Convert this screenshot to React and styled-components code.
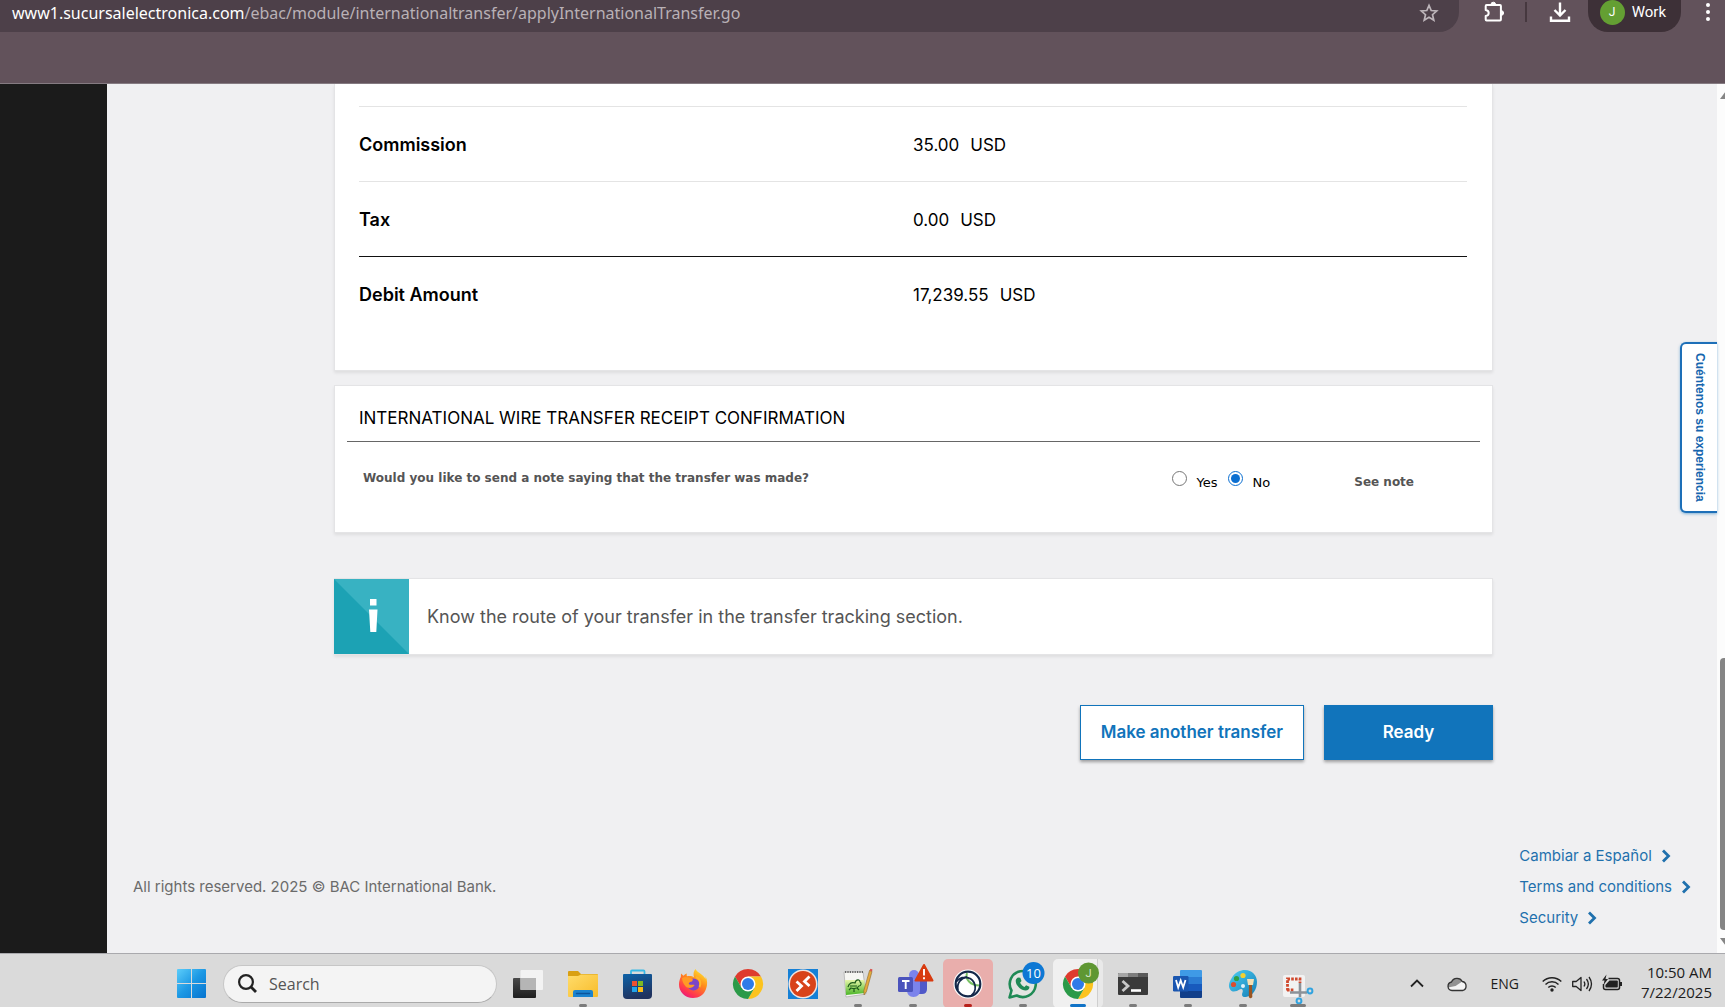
import React, { Component } from "react";
import styled, { createGlobalStyle, css } from "styled-components";

const ui = `Inter, "Liberation Sans", sans-serif`;
const system = `"Open Sans", "Noto Sans", sans-serif`;
const legacy = `"DejaVu Sans", sans-serif`;

const GlobalStyle = createGlobalStyle`
  * { box-sizing: border-box; }
  body { margin: 0; font-family: ${ui}; color: #000; }
  button, input { font: inherit; }
  button { cursor: pointer; }
  svg { display: block; flex: none; overflow: visible; }
`;

let Page = styled.div`
  display: flex;
  flex-direction: column;
  min-height: 100vh;
`;

/*------------------------------------------------------
 Browser bar
 ----------------------------------------------------- */

let Browser = styled.header`
  height: 84px;
  background: #62525b;
  border-bottom: 1px solid #857b82;
`;

let Toolbar = styled.div`
  display: flex;
  height: 32px;
  padding-right: 13px;
`;

let Address = styled.div`
  flex: 1;
  min-width: 0;
  display: flex;
  align-items: center;
  justify-content: space-between;
  padding: 0 20px 6px 12px;
  margin-right: 24px;
  border-radius: 0 0 20px 0;
  background: #4d4049;
  color: #b9b1b6;
  font-family: "Noto Sans", sans-serif;
  font-size: 16px;
  line-height: 24px;

  b {
    color: #fff;
    font-weight: 400;
  }
`;

let BarButton = styled.button`
  display: flex;
  align-items: center;
  padding: 0 0 8px;
  border: 0;
  background: none;
  color: #fff;
`;

let BarDivider = styled.span`
  width: 2px;
  height: 20px;
  margin: 2px 22px 0 20px;
  background: #46383f;
`;

let Profile = styled.button`
  display: flex;
  align-items: center;
  gap: 7px;
  margin: 0 23px 0 17px;
  padding: 0 15px 8px 12px;
  border: 0;
  border-radius: 0 0 20px 20px;
  background: #3d3037;
  color: #fff;
  font-family: Roboto, sans-serif;
  font-size: 15px;
`;

let Avatar = styled.span`
  width: 25px;
  height: 25px;
  border-radius: 50%;
  background: #649f33;
  font-size: 12px;
  line-height: 25px;
  text-align: center;
`;

/*------------------------------------------------------
 Bank page
 ----------------------------------------------------- */

let Viewport = styled.div`
  flex: 1;
  display: flex;
`;

let Sidebar = styled.div`
  width: 107px;
  background: #1b1b1b;
`;

let Content = styled.div`
  position: relative;
  flex: 1;
  display: flex;
  flex-direction: column;
  background: #f0f0f2;
`;

let Main = styled.main`
  margin: 0 224px 0 227px;
`;

let Card = styled.section`
  margin-bottom: ${props => props.$gap || 0}px;
  background: #fff;
  border: 1px solid #e4e4e6;
  box-shadow: 0 2px 3px rgba(0, 0, 0, 0.08);
`;

let AmountCard = styled(Card)`
  padding: 22px 25px 38px 24px;
  border-top: 0;
`;

let Amounts = styled.table`
  width: 100%;
  table-layout: fixed;
  border-collapse: collapse;
  text-align: left;
`;

let AmountRow = styled.tr`
  height: 75px;
  border-top: 1px solid ${props => (props.$total ? "#111" : "#e4e4e4")};

  th, td {
    width: 50%;
    padding: 0;
  }
  th {
    font-size: 18px;
    font-weight: 600;
  }
  td {
    padding-top: 2px;
    font-size: 17px;
  }
  td span { margin-left: 11px; }
`;

let NoteCard = styled(Card)`
  padding: 0 12px 21px;
`;

let NoteTitle = styled.h2`
  margin: 0;
  padding: 20px 12px 11px;
  border-bottom: 1px solid #666;
  font-size: 17px;
  font-weight: 400;
  line-height: 24px;
`;

let NoteRow = styled.div`
  display: flex;
  align-items: center;
  height: 62px;
  margin-top: 7px;
  padding: 0 66px 0 16px;
  font-family: ${legacy};
  font-size: 12px;
`;

let Question = styled.span`
  flex: 1;
  padding-bottom: 4px;
  color: #555;
  font-weight: 700;
`;

let Choice = styled.label`
  display: flex;
  align-items: center;
  gap: 10px;
  margin-right: 10px;
  padding-top: 5px;
  font-size: 13px;

  input {
    width: 15px;
    height: 15px;
    margin: 0 0 7px;
    accent-color: #0b6fd1;
  }
`;

let NoteLink = styled.a`
  margin-left: 74px;
  padding-top: 5px;
  color: #555;
  font-weight: 700;
  text-decoration: none;
`;

let InfoCard = styled(Card)`
  display: flex;
  align-items: center;
  border-left: 0;
  color: #555;
  font-size: 18px;

  p { margin: 0 18px; }
`;

let Actions = styled.div`
  display: flex;
  justify-content: flex-end;
  gap: 20px;
`;

let Button = styled.button`
  height: 55px;
  padding: 0 20px;
  border: 1px solid #1174bb;
  background: #fff;
  color: #1174bb;
  font-size: 17px;
  font-weight: 600;
  box-shadow: 0 2px 3px rgba(0, 0, 0, 0.35);

  ${props => props.$primary && css`
    min-width: 169px;
    background: #1174bb;
    color: #fff;
  `}
`;

let Footer = styled.footer`
  display: flex;
  align-items: center;
  justify-content: space-between;
  margin-top: auto;
  padding: 0 25px 20px 26px;
  color: #6b6b6b;
  font-size: 15px;
`;

let FooterLinks = styled.nav`
  display: flex;
  flex-direction: column;
`;

let FooterLink = styled.a`
  display: flex;
  align-items: center;
  gap: 8px;
  color: #1f70ad;
  line-height: 31px;
  text-decoration: none;
`;

let Feedback = styled.button`
  position: absolute;
  top: 258px;
  right: 0;
  width: 37px;
  height: 171px;
  padding: 0;
  border: 2px solid #1d6fb8;
  border-right: 0;
  border-radius: 6px 0 0 6px;
  background: #fff;
  box-shadow: 0 1px 3px rgba(17, 116, 187, 0.5);
  color: #1565ae;
  font-family: "Liberation Sans", Arial, sans-serif;
  font-size: 12px;
  font-weight: 700;
  writing-mode: vertical-rl;
`;

let Scrollbar = styled.div`
  display: flex;
  flex-direction: column;
  justify-content: space-between;
  align-items: flex-start;
  width: 8px;
  padding: 7px 0 7px 3px;
  overflow: hidden;
  background: #fcfcfc;
`;

let Thumb = styled.div`
  width: 8px;
  height: 272px;
  margin: auto 0 6px;
  border-radius: 4px 0 0 4px;
  background: #858585;
`;

/*------------------------------------------------------
 Taskbar
 ----------------------------------------------------- */

let Taskbar = styled.footer`
  display: flex;
  align-items: center;
  height: 54px;
  padding: 6px 13px 0 177px;
  border-top: 1px solid #a9a9ad;
  background: #dadada;
  font-family: ${system};
`;

let Start = styled.button`
  padding: 0;
  border: 0;
  background: none;
`;

let Search = styled.label`
  display: flex;
  align-items: center;
  gap: 12px;
  width: 274px;
  height: 38px;
  margin: 0 6px 0 17px;
  padding: 0 14px;
  border: 1px solid #c6c6c6;
  border-bottom-color: #aaa;
  border-radius: 19px;
  background: #f4f4f4;

  input {
    flex: 1;
    min-width: 0;
    padding: 0;
    border: 0;
    outline: 0;
    background: none;
    font-size: 16px;
  }
  input::placeholder { color: #555; }
`;

let Apps = styled.div`
  display: flex;
  gap: 5px;
`;

let AppButton = styled.button`
  display: flex;
  flex-direction: column;
  align-items: center;
  width: 50px;
  height: 49px;
  padding: 10px 0 1px;
  border: 0;
  border-radius: 5px;
  background: none;

  &::after {
    content: "";
    width: ${props => props.$run || 0}px;
    height: 3px;
    margin-top: auto;
    border-radius: 2px;
    background: #7c7c7c;
  }

  ${props => props.$alert && css`
    background: #e9aeac;
    &::after { background: #b8211b; }
  `}

  ${props => props.$active && css`
    background: linear-gradient(90deg, #f0f0f0 0 44px, #cfcfcf 44px 45px, #e9e9e9 45px);
    &::after { background: #1173c7; }
  `}
`;

let Tray = styled.div`
  display: flex;
  align-items: center;
  margin-left: auto;
  color: #1c1c1c;
  font-size: 14px;
`;

let TrayGroup = styled.div`
  display: flex;
  align-items: center;
  gap: 10px;
  margin: 0 19px 0 23px;
`;

let Language = styled.span`
  padding-left: 4px;
`;

let Clock = styled.div`
  padding-bottom: 4px;
  font-size: 15px;
  line-height: 20px;
  text-align: right;
`;

/*------------------------------------------------------
 Icons
 ----------------------------------------------------- */

let Icon = ({ size = 30, box = 30, children, ...rest }) => (
  <svg width={size} height={size} viewBox={`0 0 ${box} ${box}`} fill="none" aria-hidden="true" {...rest}>
    {children}
  </svg>
);

let Star = () => (
  <Icon size={20} box={20} stroke="#bdb5ba" strokeWidth="1.7" strokeLinejoin="miter">
    <path d="M10 2.4l2.2 5.1 5.5.5-4.2 3.7 1.3 5.5-4.8-2.9-4.8 2.9 1.3-5.5L2.3 8l5.5-.5z" />
  </Icon>
);

let Puzzle = () => (
  <Icon size={22} box={22} stroke="#fff" strokeWidth="2" strokeLinejoin="round">
    <path d="M3.600 4H17c.6 0 .9.3.9.9v13.700c0 .6-.3.9-.9.9H3.600c-.6 0-.9-.3-.9-.9v-3.500c1.900-.3 3-1.500 3-3.100s-1.100-2.700-3-3V4.900c0-.6.3-.9.9-.9z" />
    <path d="M8 3.500a2.300 2.300 0 0 1 4.600 0zM18.300 9.700a2.300 2.300 0 0 1 0 4.600z" fill="#fff" strokeWidth="1" />
  </Icon>
);

let Download = () => (
  <Icon size={22} box={22} stroke="#fff" strokeWidth="2.4">
    <path d="M11 1.500v12.500M5.500 9l5.500 5.500L16.500 9M2 15.500v4.300h18v-4.300" />
  </Icon>
);

let Dots = () => (
  <Icon size={8} box={8}>
    <circle cx="4" cy="-3" r="2" fill="#fff" />
    <circle cx="4" cy="4" r="2" fill="#fff" />
    <circle cx="4" cy="11" r="2" fill="#fff" />
  </Icon>
);

let InfoMark = () => (
  <Icon size={75} box={75}>
    <path d="M0 0h75v75H0z" fill="#1ca2b4" />
    <path d="M0 0h75v75z" fill="#38b2c2" />
    <path d="M36 20h6.500v6.500H36zM35 30.500h8.500l-1.200 22.500h-6z" fill="#fff" />
  </Icon>
);

let Chevron = () => (
  <Icon size={12} box={12} stroke="#1f70ad" strokeWidth="2.8">
    <path d="M3 .5L8.500 6 3 11.500" />
  </Icon>
);

let Windows = () => (
  <Icon size={29} box={29}>
    <defs>
      <linearGradient id="win" x1="0" y1="0" x2="1" y2="1">
        <stop offset="0" stopColor="#5ccdfa" />
        <stop offset="0.5" stopColor="#1c98e4" />
        <stop offset="1" stopColor="#0673cf" />
      </linearGradient>
    </defs>
    <path d="M1 0h13v14H0V1q0-1 1-1zM15 0h13q1 0 1 1v13H15zM0 15h14v14H1q-1 0-1-1zM15 15h14v13q0 1-1 1H15z" fill="url(#win)" />
  </Icon>
);

let Magnifier = () => (
  <Icon size={19} box={19} stroke="#222" strokeWidth="2.2">
    <circle cx="8" cy="8" r="6.9" />
    <path d="M12.800 12.800l5.200 5.200" strokeWidth="2.8" />
  </Icon>
);

let TaskView = () => (
  <Icon>
    <defs>
      <linearGradient id="tv" x1="0" y1="0" x2="0" y2="1">
        <stop offset="0" stopColor="#4a4a4a" />
        <stop offset="1" stopColor="#1d1d1d" />
      </linearGradient>
    </defs>
    <rect y="9" width="23" height="20" rx="1" fill="url(#tv)" />
    <rect x="7.5" y="1" width="22.5" height="20" rx="1" fill="#f3f3f3" />
    <path d="M7.500 9H23v12H7.500z" fill="#b5b5b5" />
  </Icon>
);

let Folder = () => (
  <Icon>
    <defs>
      <linearGradient id="fold" x1="0" y1="0" x2="1" y2="1">
        <stop offset="0" stopColor="#ffdc6b" />
        <stop offset="1" stopColor="#f8bc2a" />
      </linearGradient>
    </defs>
    <path d="M0 3q0-1 1-1h9l3 3h16q1 0 1 1v6H0z" fill="#d9a013" />
    <path d="M0 7h10l3-1.500h17V27q0 1-1 1H1q-1 0-1-1z" fill="url(#fold)" />
    <path d="M5 28v-5q0-2 2-2h16q2 0 2 2v5z" fill="#1b83cf" />
    <path d="M8.500 24.500h13" stroke="#0c559c" strokeWidth="1.5" strokeLinecap="round" />
  </Icon>
);

let Store = () => (
  <Icon>
    <defs>
      <linearGradient id="store" x1="0" y1="0" x2="0.3" y2="1">
        <stop offset="0" stopColor="#0d62a8" />
        <stop offset="1" stopColor="#20335f" />
      </linearGradient>
    </defs>
    <path d="M8 7V2.500q0-1 1-1h11.500q1 0 1 1V7" stroke="#39b9e6" strokeWidth="1.8" />
    <path d="M1 5h27q1 0 1 1v20q0 4-4 4H4q-4 0-4-4V6q0-1 1-1z" fill="url(#store)" />
    <path d="M9 12h5v5H9z" fill="#ef5130" />
    <path d="M15 12h5v5h-5z" fill="#7fb922" />
    <path d="M9 18h5v5H9z" fill="#22a4ea" />
    <path d="M15 18h5v5h-5z" fill="#fbbb16" />
  </Icon>
);

let Firefox = () => (
  <Icon>
    <defs>
      <linearGradient id="ff" x1="0.8" y1="0" x2="0.2" y2="1">
        <stop offset="0" stopColor="#ffe82f" />
        <stop offset="0.4" stopColor="#ff8a1c" />
        <stop offset="0.8" stopColor="#ff3352" />
        <stop offset="1" stopColor="#e31587" />
      </linearGradient>
    </defs>
    <path d="M17.500 0c1 3 7.500 5 10 10 .3-1 .2-2 0-3 2 4 2.200 9 .5 13C26 26 21 29 15 29 7 29 1 23 1 15.500c0-3 .8-5.500 1.800-7.500L3 4.500l2.500 2.300C6.500 5.500 7.800 4.700 9 4.500c-.4 1-.5 2 0 2.700 3-.7 5.500-.1 7 1 -1-3-.5-6 1.500-8.200z" fill="url(#ff)" />
    <circle cx="15.5" cy="15.5" r="6" fill="#7b45c9" />
    <path d="M4 9c3-2 8-1 11 1.500l-1 2c-2 .3-3 1-3.300 2.500 2 1.500 4 .2 6 1-2 3-6 4-9 1.500C5.500 15 4 12 4 9z" fill="#ff9a25" />
    <path d="M18 8c4 1.500 5.500 6 3.500 10" stroke="#ffb52b" strokeWidth="2" />
  </Icon>
);

let chromeParts = (
  <>
    <path d="M2 7.500A15 15 0 0 1 28 7.500H15L8.500 18.800z" fill="#de3b2e" />
    <path d="M28 7.500A15 15 0 0 1 15 30l6.500-11.200L15 7.500z" fill="#fcc31e" />
    <path d="M2 7.500A15 15 0 0 0 15 30l6.500-11.200h-13z" fill="#2b9a48" />
    <circle cx="15" cy="15" r="7.5" fill="#fff" />
    <circle cx="15" cy="15" r="6" fill="#2f7be8" />
  </>
);

let Chrome = () => <Icon>{chromeParts}</Icon>;

let ChromeWork = () => (
  <Icon>
    {chromeParts}
    <circle cx="25.5" cy="4" r="10.5" fill="#5f9733" />
    <text x="25.5" y="8" textAnchor="middle" fontFamily="Roboto" fontSize="11" fill="#d9e8cc">J</text>
  </Icon>
);

let Remote = () => (
  <Icon>
    <path d="M0 0h30v30H0z" fill="#1580d6" />
    <circle cx="15" cy="15" r="14.5" fill="#f2e4df" />
    <circle cx="15" cy="15" r="13" fill="#d8431a" />
    <path d="M8.500 12.500l5 4.500-5 5M21.500 7.500l-5 5 5 4.500" stroke="#fff" strokeWidth="2.8" />
  </Icon>
);

let Notepad = () => (
  <Icon>
    <defs>
      <linearGradient id="npp" x1="0" y1="0" x2="0" y2="1">
        <stop offset="0" stopColor="#e6f6a8" />
        <stop offset="1" stopColor="#49b526" />
      </linearGradient>
    </defs>
    <path d="M1 3h19l3 22-20 3z" fill="#f6f6f2" stroke="#aaa" strokeWidth=".7" />
    <path d="M2 3h18" stroke="#666" strokeWidth="2" strokeDasharray="1.2 1.2" />
    <path d="M2 11h19.500l1 13L3 26z" fill="url(#npp)" />
    <path d="M5 18c1-4 4-5 7-4 1-4 5-4 5-1 2 1 1 4-1 4-2 3-5 3-8 2l-2 2M7 17h7M11 20v3M14 19l2 2" stroke="#1e5c1b" strokeWidth="1.2" />
    <path d="M26.500 1.500l2.500 1-5.500 20-2.500 3.500-.2-4.300z" fill="#e5a93c" stroke="#8a6a2b" strokeWidth=".6" />
    <path d="M26.500 1.500l2.500 1 .5-2-2-.8z" fill="#d9524b" />
  </Icon>
);

let Teams = () => (
  <Icon>
    <circle cx="25" cy="7" r="4" fill="#5059c9" />
    <path d="M18 11h11v9q0 5-5 5h-4z" fill="#5059c9" />
    <circle cx="16" cy="6" r="5" fill="#7b83eb" />
    <path d="M9 11h13v10q0 7-6.500 7T9 21z" fill="#7b83eb" />
    <rect y="8" width="15" height="15" rx="1.5" fill="#4b53bc" />
    <path d="M4 12h7.500M7.700 12v8" stroke="#fff" strokeWidth="1.9" />
    <path d="M26-4L34.500 11.500H17.500z" fill="#d83b10" stroke="#d83b10" strokeWidth="2" strokeLinejoin="round" />
    <path d="M26 0v6.500M26 8.200v2" stroke="#fff" strokeWidth="1.9" />
  </Icon>
);

let Orbit = () => (
  <Icon>
    <circle cx="15" cy="15" r="14.5" fill="#fff" />
    <path d="M14 4c-2 6 3 12.500 13 12.500" stroke="#7ac266" strokeWidth="2" />
    <circle cx="15" cy="15" r="12.3" stroke="#14284a" strokeWidth="2.2" />
    <path d="M3.500 12.500c4-6 14-5.500 17.500 1 2.500 5 1 10-2.500 13M5 21C3.500 14 8 9 14 8" stroke="#14284a" strokeWidth="1.8" />
  </Icon>
);

let WhatsApp = () => (
  <Icon>
    <path d="M1.500 28.500l2-7A13 13 0 1 1 8.700 26.500z" stroke="#1f8a55" strokeWidth="2.6" fill="#e2e5e1" strokeLinejoin="round" />
    <path d="M10 8.500l2.300.3 1.200 3.200-1.400 1.700c1 2 2.400 3.300 4.400 4.200l1.600-1.700 3.300 1.500c.2 2.300-1.500 4-3.900 3.900-5-.5-9.500-4.700-9.800-9.500 0-1.500.8-2.900 2.300-3.600z" fill="#1f8a55" />
    <circle cx="25.5" cy="4" r="11" fill="#0e78d4" />
    <text x="25.5" y="9" textAnchor="middle" fontFamily="Open Sans" fontSize="13" fill="#fff">10</text>
  </Icon>
);

let Terminal = () => (
  <Icon>
    <rect y="4" width="30" height="22" rx="1" fill="#3a3a3a" />
    <path d="M0 8V5q0-1 1-1h9v4z" fill="#a5a5a5" />
    <path d="M10 4h10v4H10z" fill="#7d7d7d" />
    <path d="M20 4h9q1 0 1 1v3H20z" fill="#5a5a5a" />
    <path d="M4.500 12l5.500 5-5.500 5" stroke="#c9c9c9" strokeWidth="2.8" />
    <path d="M13 21.500h10" stroke="#fff" strokeWidth="2.6" />
  </Icon>
);

let Word = () => (
  <Icon>
    <path d="M8 1h20q1 0 1 1v6H7V2q0-1 1-1z" fill="#3f9ae6" />
    <path d="M7 8h22v7H7z" fill="#2b7cd3" />
    <path d="M7 15h22v7H7z" fill="#185abd" />
    <path d="M7 22h22v6q0 1-1 1H8q-1 0-1-1z" fill="#123f8a" />
    <rect y="7" width="15.5" height="15.5" rx="1.2" fill="#1a56b0" />
    <path d="M3 11l2.200 7.500L7.700 11.500l2.500 7 2.300-7.500" stroke="#fff" strokeWidth="1.8" />
  </Icon>
);

let Paint = () => (
  <Icon>
    <defs>
      <linearGradient id="paint" x1="0" y1="0" x2="1" y2="1">
        <stop offset="0" stopColor="#4ccdf2" />
        <stop offset="1" stopColor="#147fb8" />
      </linearGradient>
    </defs>
    <path d="M17 1c7 0 12 5 12 12s-4 14-11 15c-4 .5-4.500-2-3.500-4.500S14 19 11.500 20.500 5 24 2.500 21 .5 14 4 8.500 12 1 17 1z" fill="url(#paint)" />
    <circle cx="15" cy="6.5" r="2.6" fill="#f3d02f" />
    <circle cx="8.5" cy="9.5" r="2.6" fill="#2e9e45" />
    <circle cx="5.5" cy="15.5" r="2.6" fill="#d94d31" />
    <circle cx="15" cy="17" r="2" fill="#dff3fb" />
    <path d="M19 10h7l-1 6h-5z" fill="#f3dfb4" />
    <path d="M21 16h3l.3 12q-1.800 2.500-3.500 0z" fill="#9a5523" />
  </Icon>
);

let Snip = () => (
  <Icon>
    <rect y="6" width="22" height="22" rx="2" fill="#f2f2f2" />
    <path d="M4.500 21.500V10H17v4M4 21h7" stroke="#d0482c" strokeWidth="2.8" strokeDasharray="2.6 1.2" />
    <path d="M17 14v14M7 23.500h17" stroke="#8b9299" strokeWidth="2.6" />
    <circle cx="27" cy="22" r="2.4" stroke="#31a3df" strokeWidth="2" />
    <circle cx="16" cy="32" r="2.4" stroke="#31a3df" strokeWidth="2" />
  </Icon>
);

let Up = () => (
  <Icon size={14} box={14} stroke="#222" strokeWidth="1.8">
    <path d="M1 9.500L7 3.500l6 6" />
  </Icon>
);

let Cloud = () => (
  <Icon size={20} box={20} strokeLinejoin="round">
    <path d="M5 16.500a4.300 4.300 0 0 1-.5-8.500 6 6 0 0 1 10.800-.5 4.600 4.600 0 0 1 .2 9z" fill="#f5f5f5" />
    <path d="M1 13.500C.5 10.500 2 8.200 4.500 8a6 6 0 0 1 10.800-.5L8.500 12z" fill="#929292" />
    <path d="M5 16.500a4.300 4.300 0 0 1-.5-8.500 6 6 0 0 1 10.800-.5 4.600 4.600 0 0 1 .2 9z" stroke="#333" strokeWidth="1.3" />
  </Icon>
);

let Wifi = () => (
  <Icon size={20} box={20} stroke="#222" strokeWidth="1.5">
    <path d="M.7 7.500a13.300 13.300 0 0 1 18.600 0M3.500 10.500a9.300 9.300 0 0 1 13 0M6.300 13.500a5.300 5.300 0 0 1 7.400 0" />
    <circle cx="10" cy="16" r="1.7" fill="#222" stroke="none" />
  </Icon>
);

let Sound = () => (
  <Icon size={20} box={20} stroke="#222" strokeWidth="1.3" strokeLinejoin="round">
    <path d="M.7 7.500h3.500L9 3.500v13l-4.800-4H.7zM12 7.500q1.700 2.500 0 5M14.500 5q3.700 5 0 10M17 3q5 7 0 14" />
  </Icon>
);

let Battery = () => (
  <Icon size={20} box={20} stroke="#222" strokeWidth="1.5">
    <path d="M6.500 4.500h9q2 0 2 2v7q0 2-2 2h-12q-2 0-2-2V10" />
    <path d="M7.500 6.500H15q.8 0 .8.800v5.400q0 .8-.8.800H4.200q-.8 0-.8-.8v-1.700z" fill="#222" stroke="none" />
    <path d="M19 8v4" strokeWidth="2" />
    <path d="M4.500.5L0 6.500h2.500L1.500 11 6 5H3.500z" fill="#222" stroke="none" />
  </Icon>
);

/*------------------------------------------------------
 Application
 ----------------------------------------------------- */

const amounts = [
  { label: "Commission", value: "35.00" },
  { label: "Tax", value: "0.00" },
  { label: "Debit Amount", value: "17,239.55", total: true }
];

const links = ["Cambiar a Español", "Terms and conditions", "Security"];

const apps = [
  { name: "Task view", icon: TaskView },
  { name: "File Explorer", icon: Folder, run: 8 },
  { name: "Store", icon: Store },
  { name: "Firefox", icon: Firefox },
  { name: "Chrome", icon: Chrome },
  { name: "Remote Desktop", icon: Remote },
  { name: "Notepad++", icon: Notepad, run: 8 },
  { name: "Teams", icon: Teams, run: 8 },
  { name: "Secure Client", icon: Orbit, run: 8, alert: true },
  { name: "WhatsApp", icon: WhatsApp, run: 8 },
  { name: "Chrome Work", icon: ChromeWork, run: 16, active: true },
  { name: "Terminal", icon: Terminal, run: 8 },
  { name: "Word", icon: Word, run: 8 },
  { name: "Paint", icon: Paint, run: 8 },
  { name: "Snipping Tool", icon: Snip, run: 16 }
];

class App extends Component {
  render() {
    let makeAmount = a => (
      <AmountRow key={a.label} $total={a.total}>
        <th scope="row">{a.label}</th>
        <td>{a.value}<span>USD</span></td>
      </AmountRow>
    );

    let makeLink = text => (
      <FooterLink key={text} href="#">{text} <Chevron /></FooterLink>
    );

    let makeApp = ({ name, icon: AppIcon, run, alert, active }) => (
      <AppButton key={name} aria-label={name} $run={run} $alert={alert} $active={active}>
        <AppIcon />
      </AppButton>
    );

    return (
      <Page>
        <GlobalStyle />

        <Browser>
          <Toolbar>
            <Address>
              <span><b>www1.sucursalelectronica.com</b>/ebac/module/internationaltransfer/applyInternationalTransfer.go</span>
              <Star />
            </Address>
            <BarButton aria-label="Extensions"><Puzzle /></BarButton>
            <BarDivider />
            <BarButton aria-label="Downloads"><Download /></BarButton>
            <Profile><Avatar>J</Avatar>Work</Profile>
            <BarButton aria-label="Menu"><Dots /></BarButton>
          </Toolbar>
        </Browser>

        <Viewport>
          <Sidebar />
          <Content>
            <Main>
              <AmountCard $gap={14}>
                <Amounts>
                  <tbody>{amounts.map(makeAmount)}</tbody>
                </Amounts>
              </AmountCard>

              <NoteCard $gap={45}>
                <NoteTitle>INTERNATIONAL WIRE TRANSFER RECEIPT CONFIRMATION</NoteTitle>
                <NoteRow>
                  <Question>Would you like to send a note saying that the transfer was made?</Question>
                  <Choice><input type="radio" name="note" value="yes" />Yes</Choice>
                  <Choice><input type="radio" name="note" value="no" defaultChecked />No</Choice>
                  <NoteLink href="#">See note</NoteLink>
                </NoteRow>
              </NoteCard>

              <InfoCard $gap={50}>
                <InfoMark />
                <p>Know the route of your transfer in the transfer tracking section.</p>
              </InfoCard>

              <Actions>
                <Button>Make another transfer</Button>
                <Button $primary>Ready</Button>
              </Actions>
            </Main>

            <Footer>
              <span>All rights reserved. 2025 © BAC International Bank.</span>
              <FooterLinks>{links.map(makeLink)}</FooterLinks>
            </Footer>

            <Feedback>Cuéntenos su experiencia</Feedback>
          </Content>
          <Scrollbar>
            <Icon size={10} box={10}><path d="M0 8L6 0l6 8z" fill="#858585" /></Icon>
            <Thumb />
            <Icon size={10} box={10}><path d="M0 2h12L6 10z" fill="#858585" /></Icon>
          </Scrollbar>
        </Viewport>

        <Taskbar>
          <Start aria-label="Start"><Windows /></Start>
          <Search>
            <Magnifier />
            <input type="text" placeholder="Search" aria-label="Search" />
          </Search>
          <Apps>{apps.map(makeApp)}</Apps>
          <Tray>
            <Up />
            <TrayGroup><Cloud /></TrayGroup>
            <Language>ENG</Language>
            <TrayGroup><Wifi /><Sound /><Battery /></TrayGroup>
            <Clock>10:50 AM<br />7/22/2025</Clock>
          </Tray>
        </Taskbar>
      </Page>
    );
  }
}

export default App;
